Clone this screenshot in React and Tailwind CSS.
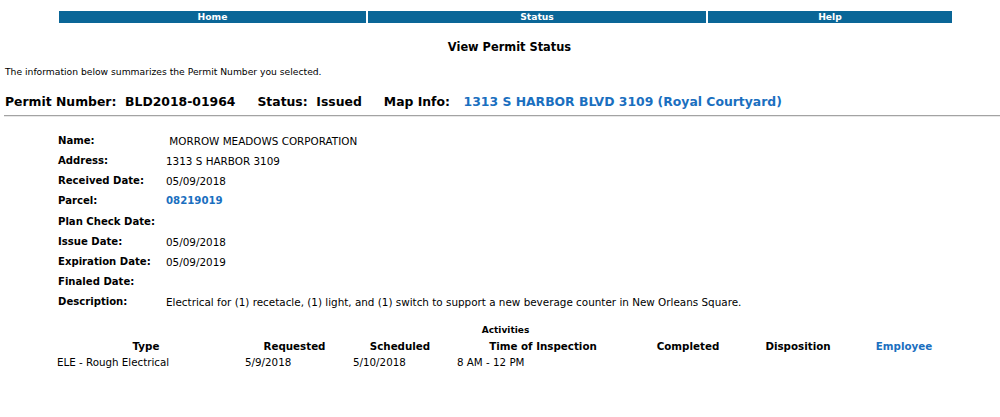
const details = [
  { label: "Name:", value: " MORROW MEADOWS CORPORATION" },
  { label: "Address:", value: "1313 S HARBOR 3109" },
  { label: "Received Date:", value: "05/09/2018" },
  { label: "Parcel:", value: "08219019", link: true },
  { label: "Plan Check Date:", value: "" },
  { label: "Issue Date:", value: "05/09/2018" },
  { label: "Expiration Date:", value: "05/09/2019" },
  { label: "Finaled Date:", value: "" },
  {
    label: "Description:",
    value:
      "Electrical for (1) recetacle, (1) light, and (1) switch to support a new beverage counter in New Orleans Square.",
  },
]

const App = () => {
  return (
    <div className="min-h-screen bg-white text-black font-['DejaVu_Sans',Verdana,sans-serif]">
      {/* Nav */}
      <div className="pt-[11px] pl-[59px]">
        <div className="flex w-[893px] gap-[2px] text-[9.2px] font-bold text-white">
          <a className="w-[307px] h-[12px] bg-[#0a6697] flex items-center justify-center">Home</a>
          <a className="w-[338px] h-[12px] bg-[#0a6697] flex items-center justify-center">Status</a>
          <a className="w-[244px] h-[12px] bg-[#0a6697] flex items-center justify-center">Help</a>
        </div>
      </div>

      <h1 className="mt-[16px] text-center text-[11.4px] leading-[16px] font-bold pl-[19px]">View Permit Status</h1>

      <p className="mt-[11px] pl-[5px] text-[9.2px] leading-[12px]">
        The information below summarizes the Permit Number you selected.
      </p>

      {/* Permit line */}
      <div className="mt-[16px] pl-[5px] flex gap-[22px] text-[12.4px] leading-[16px] font-bold whitespace-pre">
        <span>Permit Number:  BLD2018-01964</span>
        <span>Status:  Issued</span>
        <span>
          Map Info:  <a className="ml-[5px] text-[#1a6fbf]">1313 S HARBOR BLVD 3109 (Royal Courtyard)</a>
        </span>
      </div>
      <div className="ml-[4px] mt-[5px] border-t border-b border-t-[#a3a3a3] border-b-[#e8e8e8]"></div>

      {/* Details */}
      <div className="mt-[14px] pl-[58px] grid grid-cols-[108px_1fr] leading-[20.125px]">
        {details.map((d, i) => (
          <div key={i} className="contents">
            <span className="font-bold text-[10.1px]">{d.label}</span>
            <span
              className={
                d.link
                  ? "font-bold text-[10.2px] text-[#1a6fbf] whitespace-pre"
                  : "text-[10.4px] whitespace-pre"
              }
            >
              {d.value}
            </span>
          </div>
        ))}
      </div>

      {/* Activities */}
      <div className="mt-[12px] text-center text-[9px] leading-[12px] font-bold pl-[11px]">Activities</div>
      <table className="ml-[54px] mt-[2px] text-[10.3px] leading-[16px] border-collapse">
        <thead>
          <tr>
            <th className="w-[184px] p-0 text-center font-bold">Type</th>
            <th className="w-[113px] p-0 text-center font-bold">Requested</th>
            <th className="w-[98px] p-0 text-center font-bold">Scheduled</th>
            <th className="w-[188px] p-0 text-center font-bold">Time of Inspection</th>
            <th className="w-[102px] p-0 text-center font-bold">Completed</th>
            <th className="w-[118px] p-0 text-center font-bold">Disposition</th>
            <th className="w-[94px] p-0 text-center font-bold text-[#1a6fbf]">Employee</th>
          </tr>
        </thead>
        <tbody>
          <tr>
            <td className="p-0 pl-[3px]">ELE - Rough Electrical</td>
            <td className="p-0 pl-[7px]">5/9/2018</td>
            <td className="p-0 pl-[2px]">5/10/2018</td>
            <td className="p-0 pl-[8px]">8 AM - 12 PM</td>
            <td className="p-0"></td>
            <td className="p-0"></td>
            <td className="p-0"></td>
          </tr>
        </tbody>
      </table>
    </div>
  )
}

export default App
